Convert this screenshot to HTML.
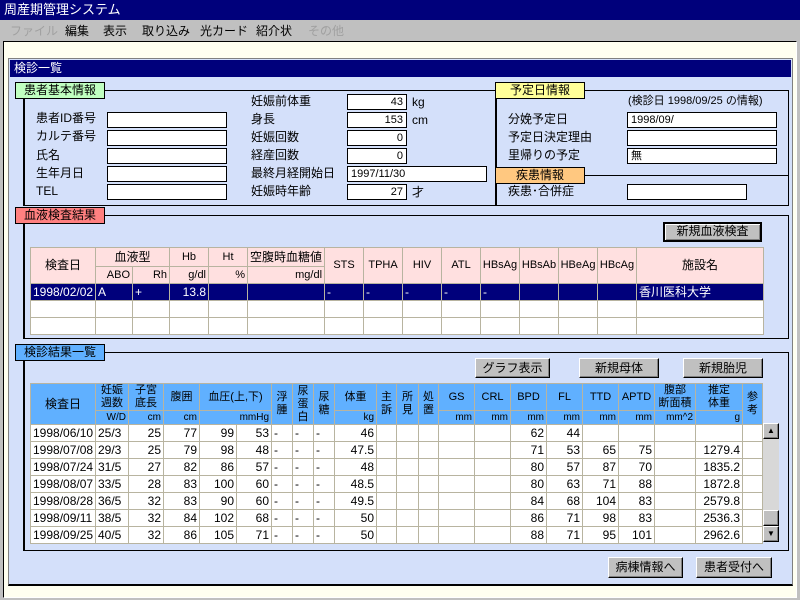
<!DOCTYPE html>
<html><head><meta charset="utf-8"><style>
*{margin:0;padding:0;box-sizing:border-box}
body{width:800px;height:600px;overflow:hidden;background:#c0c0c0;font-family:"Liberation Sans","Noto Sans CJK JP",sans-serif;font-size:12px;color:#000;position:relative}
.a{position:absolute}
.t{white-space:nowrap;line-height:14px}
.in{position:absolute;background:#fff;border:1px solid #000;height:16px;line-height:14px;padding:0 3px;font-size:11px;white-space:nowrap}
.r{text-align:right}
.lab{position:absolute;border:1px solid #000;height:17px;line-height:15px;text-align:center;font-size:12px}
.grp{position:absolute;border:1px solid #000;border-left-width:2px}
.btn{position:absolute;background:#c0c0c0;border:1px solid;border-color:#fff #000 #000 #fff;box-shadow:inset -1px -1px #808080;text-align:center;font-size:12px;line-height:18px}
table{border-collapse:collapse;table-layout:fixed;position:absolute;font-size:12px}
td{border:1px solid #b8b4a0;white-space:nowrap;overflow:hidden;padding:0 2px;line-height:13px}
.m{position:absolute;top:23px;line-height:16px;white-space:nowrap}
</style></head><body>
<div class="a" style="left:0;top:0;width:800px;height:20px;background:#00007b;color:#fff;font-size:13px;line-height:20px;padding-left:4px">周産期管理システム</div>
<span class="m" style="left:10px;color:#a0a0a0">ファイル</span>
<span class="m" style="left:65px">編集</span>
<span class="m" style="left:103px">表示</span>
<span class="m" style="left:142px">取り込み</span>
<span class="m" style="left:200px">光カード</span>
<span class="m" style="left:256px">紹介状</span>
<span class="m" style="left:308px;color:#a0a0a0">その他</span>
<div class="a" style="left:3px;top:41px;width:794px;height:557px;background:#fffff0;border:1px solid #000;border-right-color:#fff;border-bottom-color:#fff"></div>
<div class="a" style="left:8px;top:58px;width:785px;height:528px;background:#d4e0fa;border:1px solid #808080;border-bottom:2px solid #000"></div>
<div class="a" style="left:10px;top:60px;width:781px;height:17px;background:#00007b;color:#fff;line-height:17px;padding-left:4px;font-size:12px">検診一覧</div>

<div class="grp" style="left:23px;top:90px;width:473px;height:116px"></div>
<div class="grp" style="left:495px;top:90px;width:294px;height:116px"></div>
<div class="a" style="left:495px;top:175px;width:294px;border-top:1px solid #000"></div>
<div class="lab" style="left:15px;top:82px;width:90px;background:#c0ffc0">患者基本情報</div>
<div class="lab" style="left:495px;top:82px;width:90px;background:#ffff99">予定日情報</div>
<div class="lab" style="left:495px;top:167px;width:90px;background:#ffc880">疾患情報</div>
<div class="a t" style="left:36px;top:111px">患者ID番号</div>
<div class="a t" style="left:36px;top:129px">カルテ番号</div>
<div class="a t" style="left:36px;top:148px">氏名</div>
<div class="a t" style="left:36px;top:166px">生年月日</div>
<div class="a t" style="left:36px;top:184px">TEL</div>
<div class="in" style="left:107px;top:112px;width:120px"></div>
<div class="in" style="left:107px;top:130px;width:120px"></div>
<div class="in" style="left:107px;top:148px;width:120px"></div>
<div class="in" style="left:107px;top:166px;width:120px"></div>
<div class="in" style="left:107px;top:184px;width:120px"></div>
<div class="a t" style="left:251px;top:94px">妊娠前体重</div>
<div class="a t" style="left:251px;top:112px">身長</div>
<div class="a t" style="left:251px;top:130px">妊娠回数</div>
<div class="a t" style="left:251px;top:148px">経産回数</div>
<div class="a t" style="left:251px;top:166px">最終月経開始日</div>
<div class="a t" style="left:251px;top:184px">妊娠時年齢</div>
<div class="in r" style="left:347px;top:94px;width:60px">43</div>
<div class="in r" style="left:347px;top:112px;width:60px">153</div>
<div class="in r" style="left:347px;top:130px;width:60px">0</div>
<div class="in r" style="left:347px;top:148px;width:60px">0</div>
<div class="in" style="left:347px;top:166px;width:140px">1997/11/30</div>
<div class="in r" style="left:347px;top:184px;width:60px">27</div>
<div class="a t" style="left:412px;top:95px">kg</div>
<div class="a t" style="left:412px;top:113px">cm</div>
<div class="a t" style="left:412px;top:185px">才</div>
<div class="a t" style="left:628px;top:94px;font-size:11px">(検診日 1998/09/25 の情報)</div>
<div class="a t" style="left:508px;top:112px">分娩予定日</div>
<div class="a t" style="left:508px;top:130px">予定日決定理由</div>
<div class="a t" style="left:508px;top:148px">里帰りの予定</div>
<div class="a t" style="left:508px;top:184px">疾患･合併症</div>
<div class="in" style="left:627px;top:112px;width:150px">1998/09/</div>
<div class="in" style="left:627px;top:130px;width:150px"></div>
<div class="in" style="left:627px;top:148px;width:150px">無</div>
<div class="in" style="left:627px;top:184px;width:120px"></div>

<div class="grp" style="left:23px;top:215px;width:766px;height:124px"></div>
<div class="lab" style="left:15px;top:207px;width:90px;background:#ff8080">血液検査結果</div>
<div class="btn" style="left:663px;top:222px;width:99px;height:20px;border:2px solid #000;box-shadow:inset 1px 1px #fff,inset -1px -1px #808080;line-height:15px">新規血液検査</div>
<table style="left:30px;top:247px;width:734px;border:1px solid #808080;font-size:11px">
<colgroup><col style="width:65px"><col style="width:37px"><col style="width:37px"><col style="width:39px"><col style="width:39px"><col style="width:77px"><col style="width:39px"><col style="width:39px"><col style="width:39px"><col style="width:39px"><col style="width:39px"><col style="width:39px"><col style="width:39px"><col style="width:39px"><col></colgroup>
<tr style="height:19px;background:#ffe0e0;text-align:center"><td rowspan="2" style="font-size:12px">検査日</td><td colspan="2" style="font-size:12px">血液型</td><td>Hb</td><td>Ht</td><td style="font-size:12px">空腹時血糖値</td><td rowspan="2">STS</td><td rowspan="2">TPHA</td><td rowspan="2">HIV</td><td rowspan="2">ATL</td><td rowspan="2" style="padding:0">HBsAg</td><td rowspan="2" style="padding:0">HBsAb</td><td rowspan="2" style="padding:0">HBeAg</td><td rowspan="2" style="padding:0">HBcAg</td><td rowspan="2" style="font-size:12px">施設名</td></tr>
<tr style="height:17px;background:#ffe0e0;text-align:right"><td>ABO</td><td>Rh</td><td>g/dl</td><td>%</td><td>mg/dl</td></tr>
<tr style="height:17px;background:#00007b;color:#fff;font-size:12px"><td>1998/02/02</td><td>A</td><td>+</td><td class="r">13.8</td><td></td><td></td><td>-</td><td>-</td><td>-</td><td>-</td><td>-</td><td></td><td></td><td></td><td>香川医科大学</td></tr>
<tr style="height:17px;background:#fff"><td></td><td></td><td></td><td></td><td></td><td></td><td></td><td></td><td></td><td></td><td></td><td></td><td></td><td></td><td></td></tr>
<tr style="height:17px;background:#fff"><td></td><td></td><td></td><td></td><td></td><td></td><td></td><td></td><td></td><td></td><td></td><td></td><td></td><td></td><td></td></tr>
</table>

<div class="grp" style="left:23px;top:352px;width:766px;height:199px"></div>
<div class="lab" style="left:15px;top:344px;width:90px;background:#60b0ff">検診結果一覧</div>
<div class="btn" style="left:475px;top:358px;width:75px;height:20px">グラフ表示</div>
<div class="btn" style="left:579px;top:358px;width:80px;height:20px">新規母体</div>
<div class="btn" style="left:683px;top:358px;width:80px;height:20px">新規胎児</div>
<table style="left:30px;top:383px;width:733px;border:1px solid #808080">
<colgroup><col style="width:65px"><col style="width:33px"><col style="width:35px"><col style="width:36px"><col style="width:37px"><col style="width:35px"><col style="width:21px"><col style="width:21px"><col style="width:21px"><col style="width:42px"><col style="width:20px"><col style="width:22px"><col style="width:20px"><col style="width:36px"><col style="width:36px"><col style="width:36px"><col style="width:36px"><col style="width:36px"><col style="width:36px"><col style="width:41px"><col style="width:47px"><col></colgroup>
<tr style="height:27px;background:#60b0ff;text-align:center;line-height:12px;font-size:11px"><td rowspan="2" style="font-size:12px">検査日</td><td style="padding:0">妊娠<br>週数</td><td style="padding:0">子宮<br>底長</td><td>腹囲</td><td colspan="2" style="padding:0">血圧(上,下)</td><td rowspan="2" style="padding:0">浮<br>腫</td><td rowspan="2" style="padding:0">尿<br>蛋<br>白</td><td rowspan="2" style="padding:0">尿<br>糖</td><td>体重</td><td rowspan="2" style="padding:0">主<br>訴</td><td rowspan="2" style="padding:0">所<br>見</td><td rowspan="2" style="padding:0">処<br>置</td><td>GS</td><td>CRL</td><td>BPD</td><td>FL</td><td>TTD</td><td style="padding:0">APTD</td><td style="padding:0">腹部<br>断面積</td><td>推定<br>体重</td><td rowspan="2" style="padding:0">参<br>考</td></tr>
<tr style="height:12px;background:#60b0ff;text-align:right;font-size:10px;line-height:10px"><td>W/D</td><td>cm</td><td>cm</td><td colspan="2">mmHg</td><td>kg</td><td>mm</td><td>mm</td><td>mm</td><td>mm</td><td>mm</td><td>mm</td><td>mm^2</td><td>g</td></tr>
<tr style="height:17px;background:#fff"><td>1998/06/10</td><td>25/3</td><td class="r">25</td><td class="r">77</td><td class="r">99</td><td class="r">53</td><td>-</td><td>-</td><td>-</td><td class="r">46</td><td></td><td></td><td></td><td></td><td></td><td class="r">62</td><td class="r">44</td><td></td><td></td><td></td><td></td><td></td></tr>
<tr style="height:17px;background:#fff"><td>1998/07/08</td><td>29/3</td><td class="r">25</td><td class="r">79</td><td class="r">98</td><td class="r">48</td><td>-</td><td>-</td><td>-</td><td class="r">47.5</td><td></td><td></td><td></td><td></td><td></td><td class="r">71</td><td class="r">53</td><td class="r">65</td><td class="r">75</td><td></td><td class="r">1279.4</td><td></td></tr>
<tr style="height:17px;background:#fff"><td>1998/07/24</td><td>31/5</td><td class="r">27</td><td class="r">82</td><td class="r">86</td><td class="r">57</td><td>-</td><td>-</td><td>-</td><td class="r">48</td><td></td><td></td><td></td><td></td><td></td><td class="r">80</td><td class="r">57</td><td class="r">87</td><td class="r">70</td><td></td><td class="r">1835.2</td><td></td></tr>
<tr style="height:17px;background:#fff"><td>1998/08/07</td><td>33/5</td><td class="r">28</td><td class="r">83</td><td class="r">100</td><td class="r">60</td><td>-</td><td>-</td><td>-</td><td class="r">48.5</td><td></td><td></td><td></td><td></td><td></td><td class="r">80</td><td class="r">63</td><td class="r">71</td><td class="r">88</td><td></td><td class="r">1872.8</td><td></td></tr>
<tr style="height:17px;background:#fff"><td>1998/08/28</td><td>36/5</td><td class="r">32</td><td class="r">83</td><td class="r">90</td><td class="r">60</td><td>-</td><td>-</td><td>-</td><td class="r">49.5</td><td></td><td></td><td></td><td></td><td></td><td class="r">84</td><td class="r">68</td><td class="r">104</td><td class="r">83</td><td></td><td class="r">2579.8</td><td></td></tr>
<tr style="height:17px;background:#fff"><td>1998/09/11</td><td>38/5</td><td class="r">32</td><td class="r">84</td><td class="r">102</td><td class="r">68</td><td>-</td><td>-</td><td>-</td><td class="r">50</td><td></td><td></td><td></td><td></td><td></td><td class="r">86</td><td class="r">71</td><td class="r">98</td><td class="r">83</td><td></td><td class="r">2536.3</td><td></td></tr>
<tr style="height:17px;background:#fff"><td>1998/09/25</td><td>40/5</td><td class="r">32</td><td class="r">86</td><td class="r">105</td><td class="r">71</td><td>-</td><td>-</td><td>-</td><td class="r">50</td><td></td><td></td><td></td><td></td><td></td><td class="r">88</td><td class="r">71</td><td class="r">95</td><td class="r">101</td><td></td><td class="r">2962.6</td><td></td></tr>
</table>
<div class="a" style="left:763px;top:423px;width:16px;height:119px;background:#d8d8d8"></div>
<div class="btn" style="left:763px;top:423px;width:16px;height:16px;font-size:8px;line-height:14px">▲</div>
<div class="btn" style="left:763px;top:510px;width:16px;height:16px"></div>
<div class="btn" style="left:763px;top:526px;width:16px;height:16px;font-size:8px;line-height:14px">▼</div>

<div class="btn" style="left:608px;top:557px;width:75px;height:21px">病棟情報へ</div>
<div class="btn" style="left:696px;top:557px;width:76px;height:21px">患者受付へ</div>
</body></html>
